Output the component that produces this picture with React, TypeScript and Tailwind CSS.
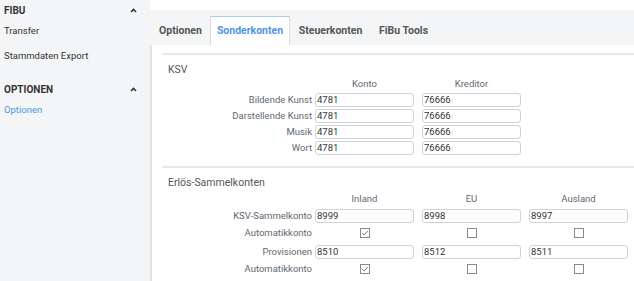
import React from "react";

const Caret = () => (
  <svg width="7" height="5" viewBox="0 0 7 5" className="block">
    <polyline points="1,4 3.5,1.5 6,4" fill="none" stroke="#333" strokeWidth="1.6" />
  </svg>
);

const Input = ({ v }: { v: string }) => (
  <div className="w-[99px] h-[14px] border border-[#cfd3d8] rounded-[3px] bg-white pl-[1px] text-[9.5px] leading-[12px] text-[#333]">
    {v}
  </div>
);

const Check = ({ on }: { on: boolean }) => (
  <div className="w-[99px] flex justify-center">
    <div className="w-[10px] h-[10px] border border-[#8a8a8a] bg-white flex items-center justify-center">
      {on && (
        <svg width="8" height="8" viewBox="0 0 8 8">
          <polyline points="1.2,4.2 3.2,6 6.8,1.8" fill="none" stroke="#777" strokeWidth="1" />
        </svg>
      )}
    </div>
  </div>
);

const Label = ({ t }: { t: string }) => (
  <div className="w-[153px] pr-[3px] text-right text-[9.5px] text-[#5f6873] leading-[14px]">{t}</div>
);

const Row = ({ label, vals }: { label: string; vals: string[] }) => (
  <div className="flex items-center h-[14px] gap-[8px]">
    <div className="-mr-[8px]">
      <Label t={label} />
    </div>
    {vals.map((v, i) => (
      <Input key={i} v={v} />
    ))}
  </div>
);

const CheckRow = ({ vals }: { vals: boolean[] }) => (
  <div className="flex items-center h-[16px] gap-[8px] mt-[2px] mb-[4px]">
    <div className="-mr-[8px]">
      <Label t="Automatikkonto" />
    </div>
    {vals.map((v, i) => (
      <Check key={i} on={v} />
    ))}
  </div>
);

const Headers = ({ h }: { h: string[] }) => (
  <div className="flex h-[12px] items-center gap-[8px] pl-[153px]">
    {h.map((x) => (
      <div key={x} className="w-[99px] text-center text-[9.5px] text-[#5f6873]">
        {x}
      </div>
    ))}
  </div>
);

export default function App() {
  return (
    <div className="w-[634px] h-[281px] flex overflow-hidden bg-white font-['Roboto',sans-serif]">
      <aside className="w-[150px] shrink-0 bg-[#f4f5f7] pl-[4px] pr-[13px]">
        <div className="flex items-center justify-between h-[20px] font-bold text-[10px] text-[#333]">
          <span>FIBU</span>
          <Caret />
        </div>
        <div className="h-[21px] pt-[1px] flex items-center text-[9.5px] text-[#333]">Transfer</div>
        <div className="h-[30px] pt-[1px] flex items-center text-[9.5px] text-[#333]">Stammdaten Export</div>
        <div className="h-[9px]" />
        <div className="flex items-center justify-between h-[19px] font-bold text-[10px] text-[#333]">
          <span>OPTIONEN</span>
          <Caret />
        </div>
        <div className="h-[20px] pt-[2px] flex items-center text-[9.5px] text-[#4f95e0]">Optionen</div>
      </aside>
      <main className="flex-1 flex flex-col min-w-0">
        <div className="h-[10px] bg-white" />
        <div className="h-[35px] bg-[#f4f5f7] flex items-end pl-[1px] text-[10.5px] font-bold text-[#555]">
          <div className="h-[29px] w-[59px] flex items-center justify-center">Optionen</div>
          <div className="h-[29px] w-[80px] flex items-center justify-center bg-white border-t border-x border-t-[#a9cbee] border-x-[#d8dbe0] text-[#4f95e0]">
            Sonderkonten
          </div>
          <div className="h-[29px] w-[81px] flex items-center justify-center">Steuerkonten</div>
          <div className="h-[29px] w-[65px] flex items-center justify-center">FiBu Tools</div>
        </div>
        <div className="flex-1 border-l-2 border-[#e1e3e6] pl-[10px] pt-[8px]">
          <section className="border-t-2 border-[#e8e8e8]">
            <div className="pl-[6px] pt-[8px] h-[23px] text-[10.5px] text-[#555] leading-[13px]">KSV</div>
            <Headers h={["Konto", "Kreditor"]} />
            <div className="flex flex-col gap-[2px] mt-[3px]">
              <Row label="Bildende Kunst" vals={["4781", "76666"]} />
              <Row label="Darstellende Kunst" vals={["4781", "76666"]} />
              <Row label="Musik" vals={["4781", "76666"]} />
              <Row label="Wort" vals={["4781", "76666"]} />
            </div>
          </section>
          <section className="border-t-2 border-[#e8e8e8] mt-[11px]">
            <div className="pl-[6px] pt-[8px] h-[25px] text-[10.5px] text-[#555] leading-[13px]">Erlös-Sammelkonten</div>
            <Headers h={["Inland", "EU", "Ausland"]} />
            <div className="mt-[4px]">
              <Row label="KSV-Sammelkonto" vals={["8999", "8998", "8997"]} />
              <CheckRow vals={[true, false, false]} />
              <Row label="Provisionen" vals={["8510", "8512", "8511"]} />
              <CheckRow vals={[true, false, false]} />
            </div>
          </section>
        </div>
      </main>
    </div>
  );
}
